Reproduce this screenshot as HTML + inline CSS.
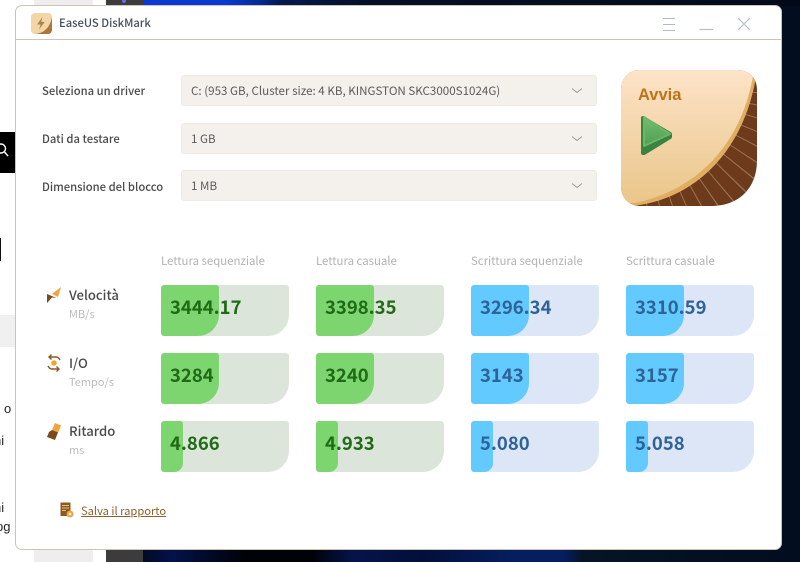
<!DOCTYPE html>
<html><head><meta charset="utf-8">
<style>
html,body{margin:0;padding:0}
body{width:800px;height:562px;overflow:hidden;position:relative;background:#fff;font-family:"Noto Sans CJK JP","Liberation Sans",sans-serif}
.a{position:absolute;white-space:nowrap}
.lbl{font-size:11.25px;font-weight:500;color:#4a4a4a;line-height:16px;left:42px}
.sel{position:absolute;left:181px;width:414px;height:29px;background:#f4f1ec;border:1px solid #efeae4;border-radius:3px;box-sizing:content-box}
.sel span{position:absolute;left:9px;top:7px;font-size:11.6px;line-height:16px;color:#5b5b5b;white-space:nowrap}
.sel svg{position:absolute;left:389px;top:11px}
.hd{font-size:11.4px;line-height:16px;color:#b2b2b2;top:253px}
.bar{position:absolute;width:128px;height:51px;border-radius:3px 3px 21px 3px;overflow:hidden}
.g{background:#dbe5da}.b{background:#dce6f6}
.fill{position:absolute;left:0;top:0;height:51px;border-radius:3px 3px 21px 3px}
.g .fill{background:#7dd56f}.b .fill{background:#62caff}
.bar span{position:absolute;left:9px;top:9px;font-size:18.5px;line-height:26px;font-weight:700;white-space:nowrap}
.g span{color:#1f6a14}.b span{color:#2e6398}
.t{font-size:13.1px;font-weight:500;color:#4a4a4a;left:69px;line-height:18px}
.s{font-size:11px;color:#bcbcbc;left:69px;line-height:14px}
</style></head><body>
<!-- background -->
<div class="a" style="left:34px;top:0;width:59px;height:562px;background:#eeeeee"></div>
<div class="a" style="left:106px;top:0;width:37px;height:562px;background:#3c3c3c"></div>
<div class="a" style="left:143px;top:0;width:657px;height:562px;background:#020d1f"></div>
<div class="a" style="left:143px;top:0;width:657px;height:6px;background:linear-gradient(90deg,#0a3ad0 0,#0a3ad0 82px,#062a90 118px,#031a50 135px,#031028 220px,#020a1a 100%)"></div>
<div class="a" style="left:122px;top:0;width:4px;height:3px;background:#6a6ae0;border-radius:0 0 2px 2px"></div>
<div class="a" style="left:143px;top:550px;width:657px;height:12px;background:linear-gradient(90deg,#020a24 0,#04124a 30px,#020a2c 60px,#010208 100px,#010208 170px,#04144a 210px,#030f3a 280px,#051e5e 370px,#051e5e 420px,#061426 440px,#020d1f 100%)"></div>
<div class="a" style="left:0;top:132px;width:16px;height:41px;background:#000"></div>
<svg class="a" style="left:0;top:143px" width="12" height="16" viewBox="0 0 12 16"><circle cx="1" cy="5.500" r="4.500" fill="none" stroke="#fff" stroke-width="1.400"/><path d="M4.500 9L8 13" stroke="#fff" stroke-width="1.500"/></svg>
<div class="a" style="left:0;top:238px;width:1px;height:23px;background:#111"></div>
<div class="a" style="left:0;top:315px;width:16px;height:32px;background:#f0f0f0"></div>
<div class="a" style="left:4px;top:401px;font:13px/16px 'Liberation Sans',sans-serif;color:#222">o</div>
<div class="a" style="left:-6px;top:433px;font:13px/16px 'Liberation Sans',sans-serif;color:#222">ni</div>
<div class="a" style="left:-6px;top:500px;font:13px/16px 'Liberation Sans',sans-serif;color:#222">ni</div>
<div class="a" style="left:-4px;top:519px;font:13px/16px 'Liberation Sans',sans-serif;color:#222">pg</div>
<!-- window -->
<div class="a" style="left:15px;top:5px;width:767px;height:545px;box-sizing:border-box;background:#fff;border:1px solid #cfc3b8;border-radius:7px"></div>
<div class="a" style="left:16px;top:39px;width:765px;height:1px;background:#cfc3b8"></div>
<!-- title -->
<svg class="a" style="left:31px;top:13px" width="21" height="21" viewBox="0 0 21 21">
<rect width="21" height="21" rx="4" fill="#f3d6a6"/>
<path d="M21 4V17a4 4 0 0 1-4 4H4C14 20 19 14 21 4Z" fill="#a9773d"/>
<path d="M11.500 4L6 11.500h3.600L8 16.500l5.800-7.600h-3.600z" fill="#a98350"/></svg>
<div class="a" style="left:59px;top:15px;font-size:11.2px;line-height:17px;font-weight:500;color:#44505e">EaseUS DiskMark</div>
<svg class="a" style="left:660px;top:15px" width="100" height="20" viewBox="0 0 100 20" fill="none" stroke="#b4bcc4" stroke-width="1.100">
<path d="M3 3.500H15M3 9.500H15M3 15.500H15"/><path d="M39.500 14.500H53"/><path d="M78 3L90 15M90 3L78 15"/></svg>
<!-- labels -->
<div class="a lbl" style="top:83px">Seleziona un driver</div>
<div class="a lbl" style="top:131px">Dati da testare</div>
<div class="a lbl" style="top:179px">Dimensione del blocco</div>
<div class="sel" style="top:75px"><span>C: (953 GB, Cluster size: 4 KB, KINGSTON SKC3000S1024G)</span><svg width="12" height="8" viewBox="0 0 12 8"><path d="M1 1.500L6 5.500L11 1.500" fill="none" stroke="#9a9a9a" stroke-width="1"/></svg></div>
<div class="sel" style="top:123px"><span>1 GB</span><svg width="12" height="8" viewBox="0 0 12 8"><path d="M1 1.500L6 5.500L11 1.500" fill="none" stroke="#9a9a9a" stroke-width="1"/></svg></div>
<div class="sel" style="top:170px"><span>1 MB</span><svg width="12" height="8" viewBox="0 0 12 8"><path d="M1 1.500L6 5.500L11 1.500" fill="none" stroke="#9a9a9a" stroke-width="1"/></svg></div>
<!-- start button -->
<svg class="a" style="left:621px;top:70px" width="136" height="136" viewBox="0 0 136 136">
<defs>
<linearGradient id="bg" x1="0" y1="0" x2="0" y2="1"><stop offset="0" stop-color="#fde3c8"/><stop offset="1" stop-color="#eac68a"/></linearGradient>
<linearGradient id="pl" x1="0" y1="0" x2="0" y2="1"><stop offset="0" stop-color="#74bd70"/><stop offset="1" stop-color="#4f9f52"/></linearGradient>
<clipPath id="c"><path d="M20 0H116C128 0 136 8 136 20V90C136 118 118 136 90 136H20C8 136 0 128 0 116V20C0 8 8 0 20 0Z"/></clipPath>
</defs>
<g clip-path="url(#c)">
<rect width="136" height="136" fill="#6d3a1c"/>
<circle cx="10" cy="10" r="125" fill="none" stroke="#b08a68" stroke-width="70" stroke-dasharray="1 11" opacity=".7"/>
<path d="M0 0H136C126 75 80 125 19 135L0 136Z" fill="#dfae62"/>
<path d="M0 0H133C122 74 76 120 14 133H0Z" fill="url(#bg)"/>
</g>
<text x="17" y="30" font-family="Liberation Sans,sans-serif" font-size="16.500" font-weight="700" fill="#bd7418">Avvia</text>
<path d="M22 48L49 64V67L23 83L22 83Z" fill="#3a8442" stroke="#3a8442" stroke-width="4" stroke-linejoin="round"/>
<path d="M23 47L49 64L23 76Z" fill="url(#pl)" stroke="#6cb569" stroke-width="2" stroke-linejoin="round"/>
</svg>
<!-- headers -->
<div class="a hd" style="left:161px">Lettura sequenziale</div>
<div class="a hd" style="left:316px">Lettura casuale</div>
<div class="a hd" style="left:471px">Scrittura sequenziale</div>
<div class="a hd" style="left:626px">Scrittura casuale</div>
<!-- row labels -->
<svg class="a" style="left:46px;top:286px" width="16" height="18" viewBox="0 0 16 18"><path d="M15 1L12 11L6 8Z" fill="#f0a43a"/><path d="M1 17L1 8L10.500 12L6 11.500Z" fill="#7a4a1e"/></svg>
<div class="a t" style="top:286px">Velocità</div>
<div class="a s" style="top:307px">MB/s</div>
<svg class="a" style="left:46px;top:354px" width="16" height="19" viewBox="0 0 16 19" fill="none" stroke="#8a5a24" stroke-width="1.400"><path d="M14 6C13 4 12 3 10 3H3M5.500 .5L3 3L5.500 5.500"/><path d="M2 12C3 14 4 15 6 15H13M10.500 12.500L13 15L10.500 17.500"/><circle cx="8" cy="9" r="2.800" fill="#f0a43a" stroke="none"/></svg>
<div class="a t" style="top:354px">I/O</div>
<div class="a s" style="top:375px">Tempo/s</div>
<svg class="a" style="left:46px;top:422px" width="16" height="18" viewBox="0 0 16 18"><path d="M9 1L15 3.500L12 11L6 8Z" fill="#f0a43a"/><path d="M6 8L12 10.500L9 18L1 15L3 10Z" fill="#7a4a1e"/></svg>
<div class="a t" style="top:422px">Ritardo</div>
<div class="a s" style="top:443px">ms</div>
<!-- bars -->
<div class="bar g" style="left:161px;top:285px"><div class="fill" style="width:58px"></div><span>3444.17</span></div>
<div class="bar g" style="left:316px;top:285px"><div class="fill" style="width:58px"></div><span>3398.35</span></div>
<div class="bar b" style="left:471px;top:285px"><div class="fill" style="width:58px"></div><span>3296.34</span></div>
<div class="bar b" style="left:626px;top:285px"><div class="fill" style="width:58px"></div><span>3310.59</span></div>
<div class="bar g" style="left:161px;top:353px"><div class="fill" style="width:58px"></div><span>3284</span></div>
<div class="bar g" style="left:316px;top:353px"><div class="fill" style="width:58px"></div><span>3240</span></div>
<div class="bar b" style="left:471px;top:353px"><div class="fill" style="width:58px"></div><span>3143</span></div>
<div class="bar b" style="left:626px;top:353px"><div class="fill" style="width:58px"></div><span>3157</span></div>
<div class="bar g" style="left:161px;top:421px"><div class="fill" style="width:22px;border-radius:3px 3px 9px 3px"></div><span>4.866</span></div>
<div class="bar g" style="left:316px;top:421px"><div class="fill" style="width:22px;border-radius:3px 3px 9px 3px"></div><span>4.933</span></div>
<div class="bar b" style="left:471px;top:421px"><div class="fill" style="width:22px;border-radius:3px 3px 9px 3px"></div><span>5.080</span></div>
<div class="bar b" style="left:626px;top:421px"><div class="fill" style="width:22px;border-radius:3px 3px 9px 3px"></div><span>5.058</span></div>
<!-- footer -->
<svg class="a" style="left:60px;top:502px" width="14" height="16" viewBox="0 0 14 16"><rect x="0.500" y="0.500" width="10" height="13.500" fill="#8a5a24"/><path d="M2 3.500H9M2 6H9M2 8.500H6" stroke="#f0c070" stroke-width="1"/><circle cx="10" cy="12" r="3.500" fill="#f0a43a"/><circle cx="10" cy="12" r="1.300" fill="#fff"/></svg>
<div class="a" style="left:81px;top:503px;font-size:11.15px;line-height:16px;color:#8d5f2a;text-decoration:underline">Salva il rapporto</div>
</body></html>
